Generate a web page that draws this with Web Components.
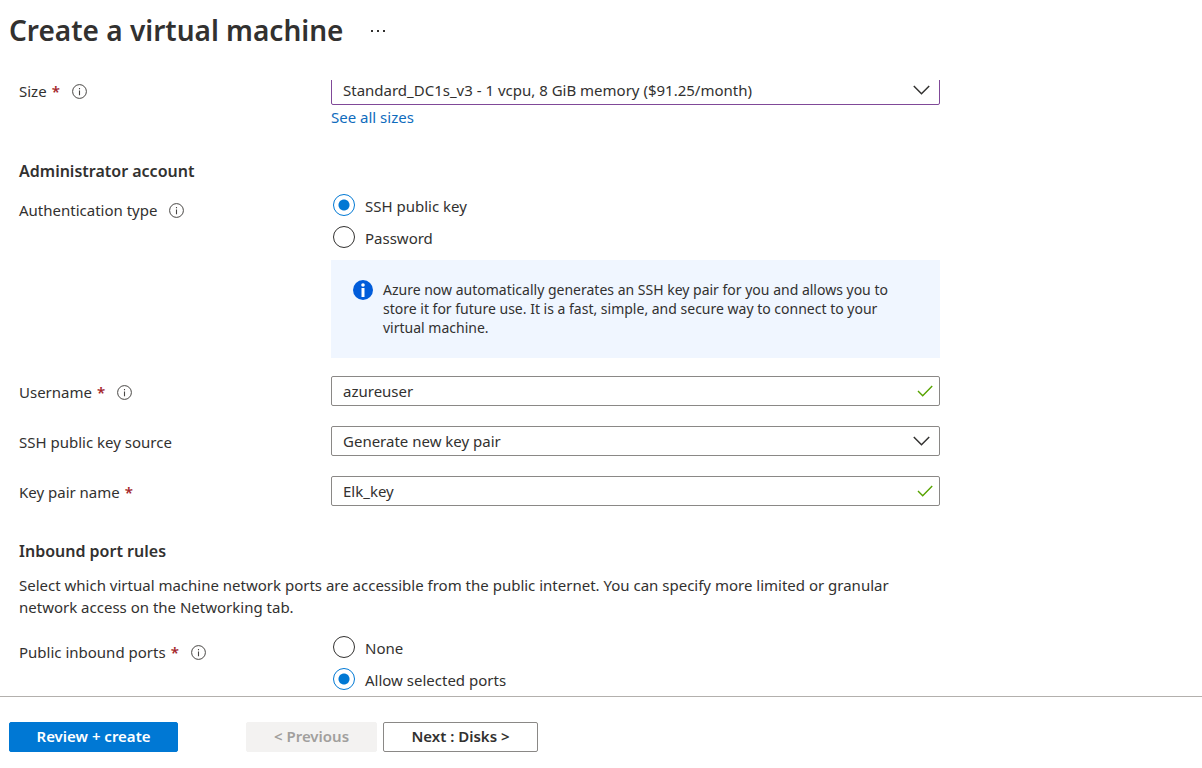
<!DOCTYPE html>
<html lang="en">
<head>
<meta charset="utf-8">
<meta name="viewport" content="width=device-width, initial-scale=1">
<title>Create a virtual machine</title>
<style>
  body { margin: 0; color: #323130; background: #fff; font: 15px/22px "Segoe UI", "Noto Sans", sans-serif; }
</style>
</head>
<body>
<vm-page>
  <vm-select-field slot="form" label="Size" required info active value="Standard_DC1s_v3 - 1 vcpu, 8 GiB memory ($91.25/month)">
    <vm-link href="#sizes">See all sizes</vm-link>
  </vm-select-field>
  <vm-section slot="form" heading="Administrator account">
    <vm-radio-field label="Authentication type" info options="SSH public key|Password" selected="0">
      <vm-notice>Azure now automatically generates an SSH key pair for you and allows you to store it for future use. It is a fast, simple, and secure way to connect to your virtual machine.</vm-notice>
    </vm-radio-field>
    <vm-text-field label="Username" required info value="azureuser"></vm-text-field>
    <vm-select-field label="SSH public key source" value="Generate new key pair"></vm-select-field>
    <vm-text-field label="Key pair name" required value="Elk_key"></vm-text-field>
  </vm-section>
  <vm-section slot="form" heading="Inbound port rules" description="Select which virtual machine network ports are accessible from the public internet. You can specify more limited or granular network access on the Networking tab.">
    <vm-radio-field label="Public inbound ports" required info options="None|Allow selected ports" selected="1"></vm-radio-field>
  </vm-section>
  <vm-button slot="submit" kind="primary">Review + create</vm-button>
  <vm-button slot="steps" kind="previous" disabled>&lt; Previous</vm-button>
  <vm-button slot="steps" kind="next">Next : Disks &gt;</vm-button>
</vm-page>

<script>
const CHEVRON = `<svg class="mark" width="17" height="10" viewBox="0 0 17 10" fill="none" stroke="#323130" stroke-width="1.5" aria-hidden="true"><path d="M.8 1l7.7 7.7L16.200 1"/></svg>`;
const CHECK = `<svg class="mark" width="16" height="12" viewBox="0 0 16 12" fill="none" stroke="#57a300" stroke-width="1.4" aria-hidden="true"><path d="M1 6l4.700 4.700L15.200 1"/></svg>`;

class VmPage extends HTMLElement {
  constructor() {
    super();
    this.attachShadow({ mode: 'open' }).innerHTML = `
      <style>
        :host { display: flex; flex-direction: column; height: 100vh; }
        header { display: flex; align-items: center; gap: 23px; height: 60px; flex: none; padding: 0 9px 20px; }
        h1 { margin: 0; font-size: 28px; line-height: 36px; font-weight: 600; }
        .more { display: grid; place-items: center; width: 24px; height: 24px; padding: 2px 0 0; border: 0; background: none; }
        main { flex: 1; min-height: 0; overflow: hidden; padding: 0 19px; }
        .form { max-width: 921px; margin-top: -5px; }
        footer { display: flex; flex: none; gap: 68px; padding: 25px 9px 16px; border-top: 1px solid #b3b0ad; }
        .steps { display: flex; gap: 6px; }
      </style>
      <header>
        <h1>Create a virtual machine</h1>
        <button class="more" aria-label="More options"><svg width="14" height="2" viewBox="0 0 14 2" fill="#323130"><path d="M0 0h2v2H0zM6 0h2v2H6zM12 0h2v2h-2z"/></svg></button>
      </header>
      <main><div class="form"><slot name="form"></slot></div></main>
      <footer><slot name="submit"></slot><div class="steps"><slot name="steps"></slot></div></footer>`;
  }
}

class VmSection extends HTMLElement {
  connectedCallback() {
    if (this.shadowRoot) return;
    const text = this.getAttribute('description');
    this.attachShadow({ mode: 'open' }).innerHTML = `
      <style>
        :host { display: block; margin-top: 31px; }
        h2 { margin: 0 0 11px; font-size: 16px; line-height: 24px; font-weight: 600; }
        p { margin: 0 0 18px; }
        .rows { display: grid; gap: 18px; }
      </style>
      <h2>${this.getAttribute('heading')}</h2>
      ${text ? `<p>${text}</p>` : ''}
      <div class="rows"><slot></slot></div>`;
  }
}

/* Shared row: a label column beside the control column. */
class VmField extends HTMLElement {
  connectedCallback() {
    if (this.shadowRoot) return;
    const star = this.hasAttribute('required') ? '<span class="star" aria-hidden="true">*</span>' : '';
    const info = this.hasAttribute('info') ? `<svg class="info" width="15" height="15" viewBox="0 0 15 15" fill="none" stroke="#484644" aria-hidden="true"><circle cx="7.500" cy="7.500" r="6.900"/><path d="M7.500 6.400v4.800M7.500 4v1.300" stroke-width="1.100"/></svg>` : '';
    this.attachShadow({ mode: 'open' }).innerHTML = `
      <style>
        :host { display: grid; grid-template-columns: 312px minmax(0, 1fr); align-items: start; }
        .name { display: flex; align-items: center; line-height: 32px; }
        .star { margin-left: 5px; color: #a4262c; font-weight: 600; }
        .info { margin-left: 12px; }
        .box { display: grid; align-items: center; }
        .box > * { grid-area: 1 / 1; }
        .mark { justify-self: end; margin-right: 7px; pointer-events: none; }
        select ~ .mark { margin-right: 10px; }
        input:not([type]), select { box-sizing: border-box; width: 100%; height: 30px; margin: 0; padding: 0 32px 0 11px;
          border: 1px solid #8a8886; border-radius: 2px; background: #fff; color: inherit; font: inherit; appearance: none; }
        :host([active]) select { border-color: #804998; }
        .options { display: grid; gap: 8px; padding-left: 2px; }
        .option { display: flex; align-items: flex-start; gap: 10px; line-height: 24px; }
        input[type=radio] { box-sizing: border-box; flex: none; width: 22px; height: 22px; margin: 0; border: 1px solid #323130; border-radius: 50%; appearance: none; }
        input[type=radio]:checked { border-color: #0078d4; background: radial-gradient(circle, #0078d4 5px, transparent 6px); }
      </style>
      ${this.labelMarkup(`${this.getAttribute('label')}${star}${info}`)}
      <div>${this.control()}<slot></slot></div>`;
  }
  labelMarkup(content) { return `<label class="name" for="control">${content}</label>`; }
}

class VmTextField extends VmField {
  control() { return `<div class="box"><input id="control" value="${this.getAttribute('value')}">${CHECK}</div>`; }
}

class VmSelectField extends VmField {
  control() { return `<div class="box"><select id="control"><option>${this.getAttribute('value')}</option></select>${CHEVRON}</div>`; }
}

class VmRadioField extends VmField {
  labelMarkup(content) { return `<div class="name" id="name">${content}</div>`; }
  control() {
    const selected = Number(this.getAttribute('selected'));
    const options = this.getAttribute('options').split('|').map((text, i) =>
      `<label class="option"><input type="radio" name="choice" ${i === selected ? 'checked' : ''}>${text}</label>`);
    return `<div class="options" role="radiogroup" aria-labelledby="name">${options.join('')}</div>`;
  }
}

class VmLink extends HTMLElement {
  connectedCallback() {
    if (this.shadowRoot) return;
    this.attachShadow({ mode: 'open' }).innerHTML = `
      <style>
        :host { display: block; margin-top: 1px; }
        a { color: #0f6cbd; text-decoration: none; }
      </style>
      <a href="${this.getAttribute('href')}"><slot></slot></a>`;
  }
}

class VmNotice extends HTMLElement {
  constructor() {
    super();
    this.attachShadow({ mode: 'open' }).innerHTML = `
      <style>
        :host { display: flex; gap: 10px; margin-top: 10px; padding: 20px 40px 21px 22px; background: #f0f6ff; font-size: 14px; line-height: 19px; }
        svg { flex: none; }
      </style>
      <svg width="20" height="20" viewBox="0 0 20 20" aria-hidden="true"><circle cx="10" cy="10" r="10" fill="#015cda"/><circle cx="10" cy="5" r="1.800" fill="#fff"/><path d="M8.500 8h3v9h-3z" fill="#fff"/></svg>
      <div><slot></slot></div>`;
  }
}

class VmButton extends HTMLElement {
  connectedCallback() {
    if (this.shadowRoot) return;
    this.attachShadow({ mode: 'open' }).innerHTML = `
      <style>
        :host { display: block; }
        button { box-sizing: border-box; width: 155px; height: 30px; padding: 0 0 2px; border: 1px solid #8a8886; border-radius: 2px;
          background: #fff; color: inherit; font: inherit; font-weight: 600; white-space: nowrap; }
        :host([kind=primary]) button { width: 169px; border-color: #0078d4; background: #0078d4; color: #fff; }
        :host([kind=previous]) button { width: 131px; border-color: #f3f2f1; background: #f3f2f1; color: #a19f9d; }
      </style>
      <button type="button" ${this.hasAttribute('disabled') ? 'disabled' : ''}><slot></slot></button>`;
  }
}

customElements.define('vm-page', VmPage);
customElements.define('vm-section', VmSection);
customElements.define('vm-text-field', VmTextField);
customElements.define('vm-select-field', VmSelectField);
customElements.define('vm-radio-field', VmRadioField);
customElements.define('vm-link', VmLink);
customElements.define('vm-notice', VmNotice);
customElements.define('vm-button', VmButton);
</script>
</body>
</html>
